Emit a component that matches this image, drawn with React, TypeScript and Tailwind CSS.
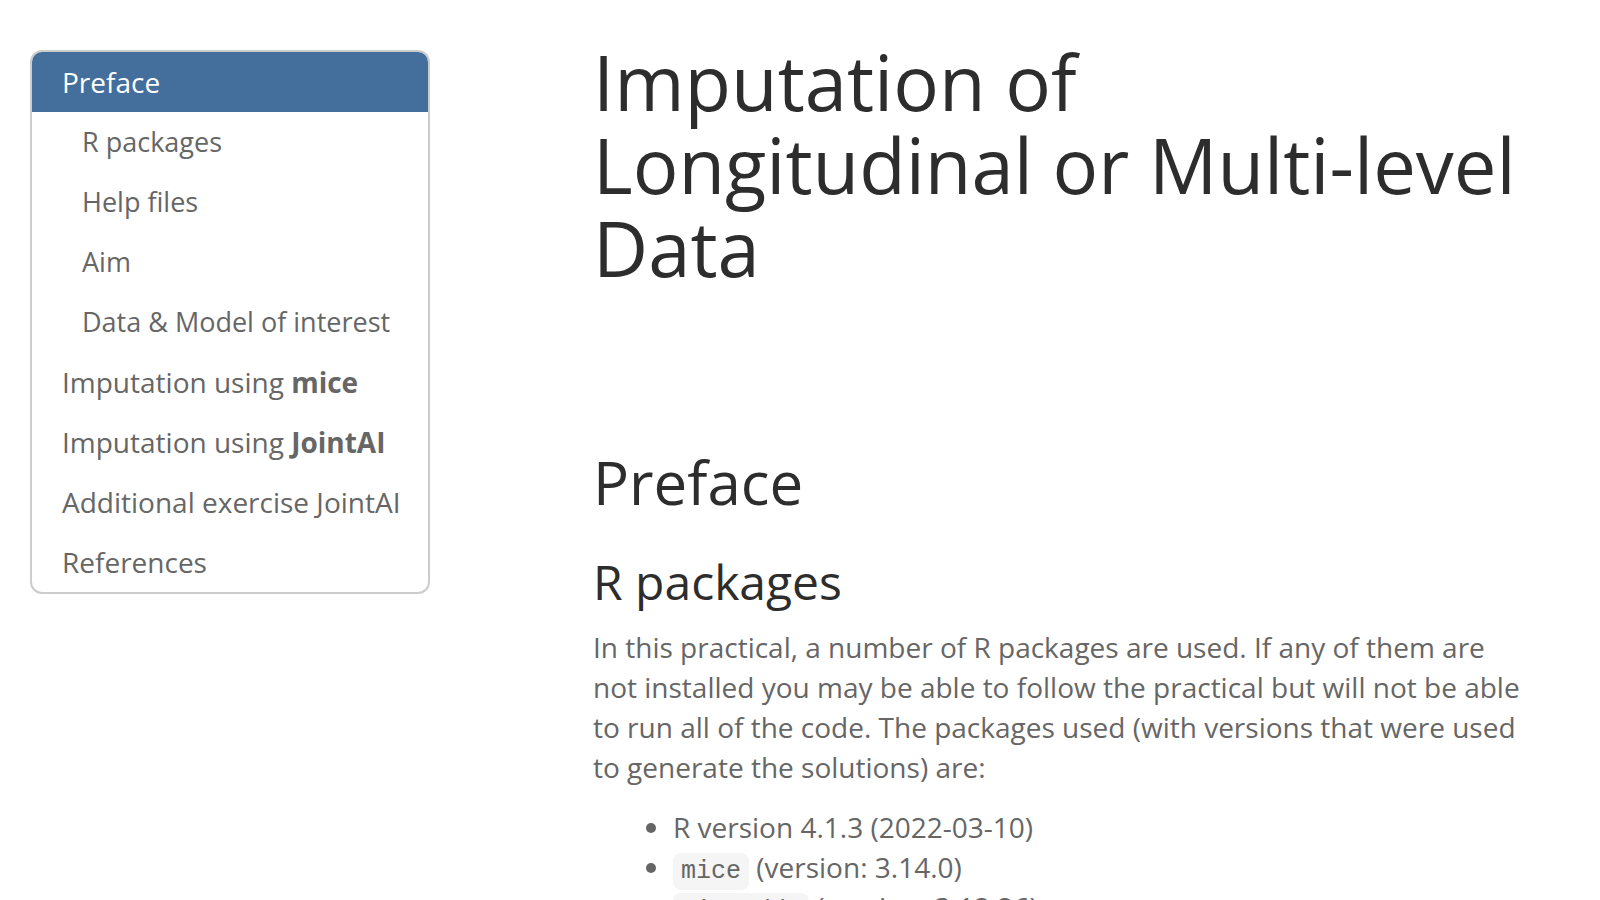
import type { ReactNode } from "react";

const packages = [
  { name: "mice", version: "3.14.0" },
  { name: "miceadds", version: "3.12.26" },
];

const sections: { id: string; label: ReactNode; nested?: boolean }[] = [
  { id: "r-packages", label: "R packages", nested: true },
  { id: "help-files", label: "Help files", nested: true },
  { id: "aim", label: "Aim", nested: true },
  { id: "data", label: "Data & Model of interest", nested: true },
  { id: "mice", label: <>Imputation using <strong>mice</strong></> },
  { id: "jointai", label: <>Imputation using <strong>JointAI</strong></> },
  { id: "additional", label: "Additional exercise JointAI" },
  { id: "references", label: "References" },
];

export default function App() {
  return (
    <div className="h-screen overflow-hidden bg-white font-['Open_Sans',sans-serif] text-[28px] leading-[40px] text-[#666666]">
      <div className="flex px-[30px] pt-[40px]">
        <nav aria-label="Contents" className="mt-[10px] w-[400px] shrink-0 self-start overflow-hidden rounded-xl border-2 border-[#cccccc]">
          <a href="#preface" className="block bg-[#446e9b] px-[30px] py-[10px] text-white">Preface</a>
          {sections.map((s) => (
            <a
              key={s.id}
              href={`#${s.id}`}
              className={s.nested ? "block py-[10px] pl-[50px] text-[27px] leading-[40px]" : "block py-[10px] pl-[30px]"}
            >
              {s.label}
            </a>
          ))}
        </nav>
        <main className="ml-[163px] min-w-0 flex-1 pr-[40px]">
          <h1 className="text-[76px] leading-[83px] text-[#2d2d2d]">Imputation of Longitudinal or Multi-level Data</h1>
          <h1 id="preface" className="mt-[160px] text-[60px] leading-[66px] text-[#2d2d2d]">Preface</h1>
          <h2 id="r-packages" className="mt-[40px] text-[48px] leading-[53px] text-[#2d2d2d]">R packages</h2>
          <p className="mt-[19px]">
            In this practical, a number of R packages are used. If any of them are not installed you may be able to
            follow the practical but will not be able to run all of the code. The packages used (with versions that
            were used to generate the solutions) are:
          </p>
          <ul className="mt-[20px] list-disc pl-[80px]">
            <li>R version 4.1.3 (2022-03-10)</li>
            {packages.map((p) => (
              <li key={p.name}>
                <code className="rounded-lg bg-[#f5f5f5] px-2 py-1 font-['Liberation_Mono',monospace] text-[25px] leading-none">{p.name}</code>{" "}
                (version: {p.version})
              </li>
            ))}
          </ul>
        </main>
      </div>
    </div>
  );
}
